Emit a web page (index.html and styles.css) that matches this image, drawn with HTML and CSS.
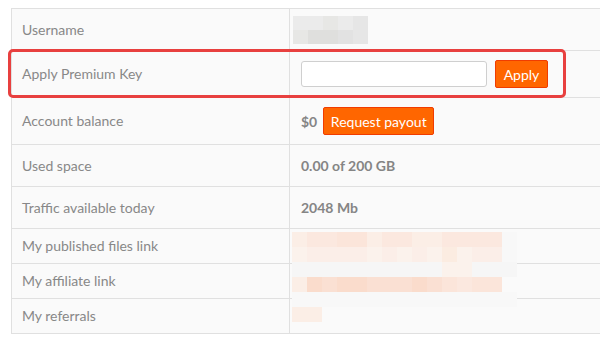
FILE: index.html
```html
<!DOCTYPE html>
<html lang="en">
<head>
    <meta charset="UTF-8">
    <title>Account</title>
    <link rel="stylesheet" href="styles.css">
</head>
<body>
    <div class="info">
        <div class="row">
            <div class="label">Username</div>
            <div class="value">
                <div class="mosaic name">
                    <span class="c1"></span><span class="c1"></span><span class="c2"></span><span class="c1"></span><span class="c3"></span>
                    <span class="c2"></span><span class="c4"></span><span class="c4"></span><span class="c5"></span><span class="c3"></span>
                </div>
            </div>
        </div>
        <div class="row tall">
            <div class="label">Apply Premium Key</div>
            <div class="value">
                <input class="key-input" type="text">
                <button class="btn apply">Apply</button>
            </div>
        </div>
        <div class="row tall">
            <div class="label">Account balance</div>
            <div class="value"><b>$0</b><button class="btn payout">Request payout</button></div>
        </div>
        <div class="row">
            <div class="label">Used space</div>
            <div class="value"><b>0.00 of 200 GB</b></div>
        </div>
        <div class="row">
            <div class="label">Traffic available today</div>
            <div class="value"><b>2048 Mb</b></div>
        </div>
        <div class="row short">
            <div class="label">My published files link</div>
            <div class="value"></div>
        </div>
        <div class="row short">
            <div class="label">My affiliate link</div>
            <div class="value"></div>
        </div>
        <div class="row short">
            <div class="label">My referrals</div>
            <div class="value"></div>
        </div>

        <!-- red mark round the premium key row -->
        <div class="highlight"></div>

        <!-- blurred links, drawn over the last rows -->
        <div class="mosaic links">
            <span class="o1"></span><span class="o2"></span><span class="o2"></span><span class="o3"></span><span class="o3"></span><span class="o1"></span><span class="o2"></span><span class="o2"></span><span class="o1"></span><span class="o1"></span><span class="o2"></span><span class="o2"></span><span class="o2"></span><span class="o2"></span><span class="g1"></span>
            <span class="p1"></span><span class="p2"></span><span class="p2"></span><span class="p2"></span><span class="p2"></span><span class="p1"></span><span class="p2"></span><span class="p1"></span><span class="p2"></span><span class="p1"></span><span class="p3"></span><span class="p1"></span><span class="p2"></span><span class="p2"></span><span class="g1"></span>
            <span class="g2"></span><span class="g2"></span><span class="g2"></span><span class="g2"></span><span class="g2"></span><span class="g2"></span><span class="g2"></span><span class="g2"></span><span class="g2"></span><span class="g2"></span><span class="p1"></span><span class="p1"></span><span class="g2"></span><span class="g2"></span><span class="g2"></span>
            <span class="o1"></span><span class="q1"></span><span class="q2"></span><span class="q1"></span><span class="q1"></span><span class="q2"></span><span class="q2"></span><span class="q2"></span><span class="q1"></span><span class="q2"></span><span class="o3"></span><span class="o2"></span><span class="o3"></span><span class="o3"></span><span class="none"></span>
            <span class="g1"></span><span class="g1"></span><span class="g1"></span><span class="g1"></span><span class="g1"></span><span class="g1"></span><span class="g1"></span><span class="g1"></span><span class="g1"></span><span class="g1"></span><span class="g1"></span><span class="g1"></span><span class="g1"></span><span class="g1"></span><span class="g1"></span>
            <span class="o1"></span><span class="o1"></span>
        </div>
    </div>
</body>
</html>
```

FILE: styles.css
```css
body {
    margin: 0;
    padding: 8px 0 8px 11px;
    background: #fff;
    font-family: 'Lato', 'Open Sans', sans-serif;
    font-size: 14px;
    color: #888;
}
.info {
    position: relative;
    border-left: 1px solid #e0e0e0;
    border-top: 1px solid #e0e0e0;
}
.row {
    display: grid;
    grid-template-columns: 278px 1fr;
    height: 42px;
    box-sizing: border-box;
    border-bottom: 1px solid #e0e0e0;
    background: #fafafa;
}
.row.tall { height: 47px; }
.row.short { height: 35px; }
.label, .value {
    display: flex;
    align-items: center;
}
.label {
    padding-left: 10px;
    padding-bottom: 1px;
    border-right: 1px solid #e0e0e0;
}
.value {
    padding-left: 11px;
    gap: 6px;
}
.value b {
    color: #858585;
    font-weight: 700;
}
.highlight {
    position: absolute;
    left: -4px;
    top: 40px;
    width: 558px;
    height: 49px;
    box-sizing: border-box;
    border: 3px solid #e8403f;
    border-radius: 5px;
}
.key-input {
    width: 186px;
    height: 26px;
    box-sizing: border-box;
    border: 1px solid #cfcfcf;
    border-radius: 3px;
    background: #fff;
    margin: 0 2px 0 0;
}
.btn {
    height: 28px;
    padding: 0;
    background: #ff6600;
    border: 1px solid #f03c00;
    border-radius: 2px;
    color: #fff;
    font-family: inherit;
    font-size: 14px;
    white-space: nowrap;
}
.btn.apply { width: 53px; }
.btn.payout { width: 111px; }
.mosaic { display: grid; }
.mosaic span { display: block; }
.mosaic.name {
    grid-template-columns: repeat(5, 15px);
    grid-auto-rows: 14px;
    margin-left: -8px;
}
.mosaic.links {
    position: absolute;
    left: 280px;
    top: 223px;
    grid-template-columns: repeat(15, 15px);
    grid-auto-rows: 15px;
}
.c1 { background: #ebebeb; }
.c2 { background: #e7e7e5; }
.c3 { background: #e6e6e6; }
.c4 { background: #dfdfdd; }
.c5 { background: #e2e2e2; }
.o1 { background: #fbeee6; }
.o2 { background: #fbe8df; }
.o3 { background: #fbe5da; }
.p1 { background: #fbf2ec; }
.p2 { background: #fbeee8; }
.p3 { background: #fbece1; }
.q1 { background: #fadccc; }
.q2 { background: #fae0d3; }
.g1 { background: #f8f8f8; }
.g2 { background: #f6f6f6; }
```
